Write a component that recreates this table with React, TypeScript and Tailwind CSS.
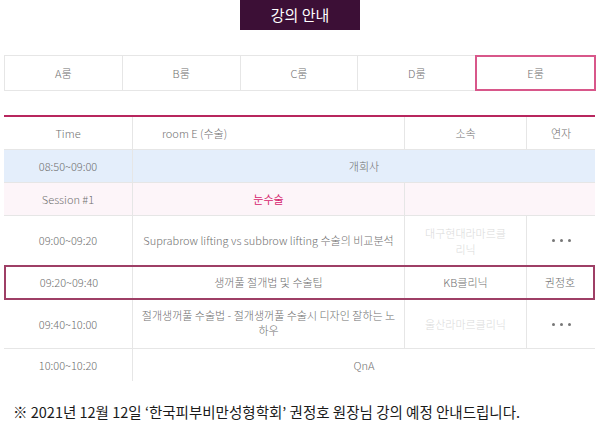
const font = "font-['Noto_Sans_CJK_KR','Noto_Sans',sans-serif]";

const rooms = ["A룸", "B룸", "C룸", "D룸", "E룸"];

const cell = "flex items-center justify-center text-center border-r border-[#e6e6e6]";

function Dots() {
  return (
    <div className="flex items-center justify-center gap-[5px]">
      <span className="w-[3px] h-[3px] rounded-full bg-[#777]" />
      <span className="w-[3px] h-[3px] rounded-full bg-[#777]" />
      <span className="w-[3px] h-[3px] rounded-full bg-[#777]" />
    </div>
  );
}

export default function App() {
  return (
    <div className={`${font} w-[600px] h-[432px] bg-white text-[#707070] font-light text-[11px] overflow-hidden`}>
      <div className="flex justify-center">
        <div className="w-[120px] h-[30px] bg-[#3c0f36] text-white font-normal text-[15px] flex items-center justify-center">
          강의 안내
        </div>
      </div>

      <div className="mt-[25px] mx-[4px] w-[592px] h-[36px] flex border border-[#e6e6e6]">
        {rooms.map((r, i) => (
          <div
            key={r}
            className={
              i === 4
                ? "flex-1 flex items-center justify-center border-2 border-[#d8578a] -m-[1px]"
                : "flex-1 flex items-center justify-center border-r border-[#e6e6e6]"
            }
          >
            {r}
          </div>
        ))}
      </div>

      <div className="mt-[24px] ml-[4px] w-[591px] border-t-2 border-[#b8265e]">
        {/* header */}
        <div className="grid grid-cols-[129px_272px_122px_68px] h-[33px] border-b border-[#e6e6e6]">
          <div className={cell}>Time</div>
          <div className="flex items-center pl-[29px] border-r border-[#e6e6e6]">room E (수술)</div>
          <div className={cell}>소속</div>
          <div className="flex items-center justify-center">연자</div>
        </div>

        <div className="grid grid-cols-[129px_462px] h-[33px] bg-[#e4eefb] border-b border-[#e6e6e6]">
          <div className={cell}>08:50~09:00</div>
          <div className="flex items-center justify-center">개회사</div>
        </div>

        <div className="grid grid-cols-[129px_272px_190px] h-[33px] bg-[#fdf5f9] border-b border-[#e6e6e6]">
          <div className={cell}>Session #1</div>
          <div className={`${cell} text-[#d6246e] font-normal`}>눈수술</div>
          <div />
        </div>

        <div className="grid grid-cols-[129px_272px_122px_68px] h-[49px]">
          <div className={cell}>09:00~09:20</div>
          <div className={cell}>Suprabrow lifting vs subbrow lifting 수술의 비교분석</div>
          <div className={`${cell} text-[#dadada] px-[17px] leading-[16px]`}>대구현대라마르클리닉</div>
          <Dots />
        </div>

        <div className="grid grid-cols-[127px_272px_122px_66px] h-[35px] border-2 border-[#9e3f66]">
          <div className={cell}>09:20~09:40</div>
          <div className={cell}>생꺼풀 절개법 및 수술팁</div>
          <div className={cell}>KB클리닉</div>
          <div className="flex items-center justify-center">권정호</div>
        </div>

        <div className="grid grid-cols-[129px_272px_122px_68px] h-[49px] border-b border-[#e6e6e6]">
          <div className={cell}>09:40~10:00</div>
          <div className={`${cell} px-[8px] leading-[15px] items-start pt-[8px]`}>
            절개생꺼풀 수술법 - 절개생꺼풀 수술시 디자인 잘하는 노하우
          </div>
          <div className={`${cell} text-[#dadada]`}>울산라마르클리닉</div>
          <Dots />
        </div>

        <div className="grid grid-cols-[129px_462px] h-[32px]">
          <div className={cell}>10:00~10:20</div>
          <div className="flex items-center justify-center">QnA</div>
        </div>
      </div>

      <div className="mt-[20px] ml-[13px] text-[14.5px] text-[#1a1a1a] font-normal">
        ※ 2021년 12월 12일 ‘한국피부비만성형학회’ 권정호 원장님 강의 예정 안내드립니다.
      </div>
    </div>
  );
}
